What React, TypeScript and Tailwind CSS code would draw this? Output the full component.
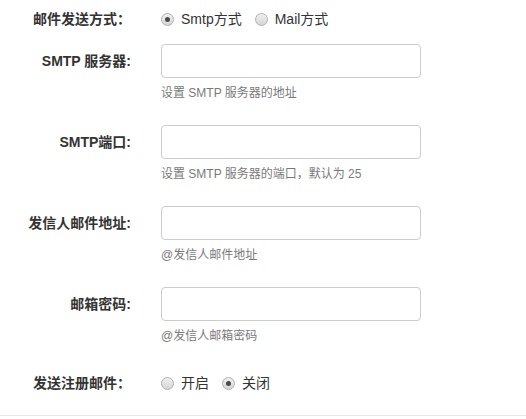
import { useState } from 'react';

const font = 'font-["Liberation_Sans","Noto_Sans_CJK_SC",sans-serif]';

function Radio({ checked, label, onClick }: { checked: boolean; label: string; onClick: () => void }) {
  return (
    <label className="flex items-center cursor-pointer" onClick={onClick}>
      <span className="w-[13px] h-[13px] rounded-full border border-[#b0b0b0] bg-gradient-to-b from-[#f0f0f0] to-[#d6d6d6] flex items-center justify-center">
        {checked && <span className="w-[5px] h-[5px] rounded-full bg-[#4a4a4a]" />}
      </span>
      <span className="ml-[7px] text-[14px] text-[#333]">{label}</span>
    </label>
  );
}

function InputRow({ label, help }: { label: string; help: string }) {
  return (
    <div className="flex mb-[23px]">
      <div className="w-[131px] h-[34px] flex items-center justify-end text-[14px] font-bold text-[#333]">
        {label}
      </div>
      <div className="ml-[30px]">
        <input
          type="text"
          className="block w-[260px] h-[34px] border border-[#ccc] rounded-[4px] px-3 outline-none"
        />
        <p className="mt-[7px] text-[12px] leading-[17px] text-[#7a7a7a]">{help}</p>
      </div>
    </div>
  );
}

export default function App() {
  const [method, setMethod] = useState('smtp');
  const [notify, setNotify] = useState('off');

  return (
    <div className={`${font} bg-white w-[526px] h-[416px] pt-[9px] border-b border-[#e8e8e8] box-border`}>
      <div className="flex h-[20px] items-center mb-[15px]">
        <div className="w-[131px] text-right text-[14px] font-bold text-[#333]">邮件发送方式：</div>
        <div className="ml-[30px] flex items-center">
          <Radio checked={method === 'smtp'} label="Smtp方式" onClick={() => setMethod('smtp')} />
          <div className="ml-[13px]">
            <Radio checked={method === 'mail'} label="Mail方式" onClick={() => setMethod('mail')} />
          </div>
        </div>
      </div>

      <InputRow label="SMTP 服务器:" help="设置 SMTP 服务器的地址" />
      <InputRow label="SMTP端口:" help="设置 SMTP 服务器的端口，默认为 25" />
      <InputRow label="发信人邮件地址:" help="@发信人邮件地址" />
      <InputRow label="邮箱密码:" help="@发信人邮箱密码" />

      <div className="flex h-[20px] items-center mt-[28px]">
        <div className="w-[131px] text-right text-[14px] font-bold text-[#333]">发送注册邮件：</div>
        <div className="ml-[30px] flex items-center">
          <Radio checked={notify === 'on'} label="开启" onClick={() => setNotify('on')} />
          <div className="ml-[13px]">
            <Radio checked={notify === 'off'} label="关闭" onClick={() => setNotify('off')} />
          </div>
        </div>
      </div>
    </div>
  );
}
